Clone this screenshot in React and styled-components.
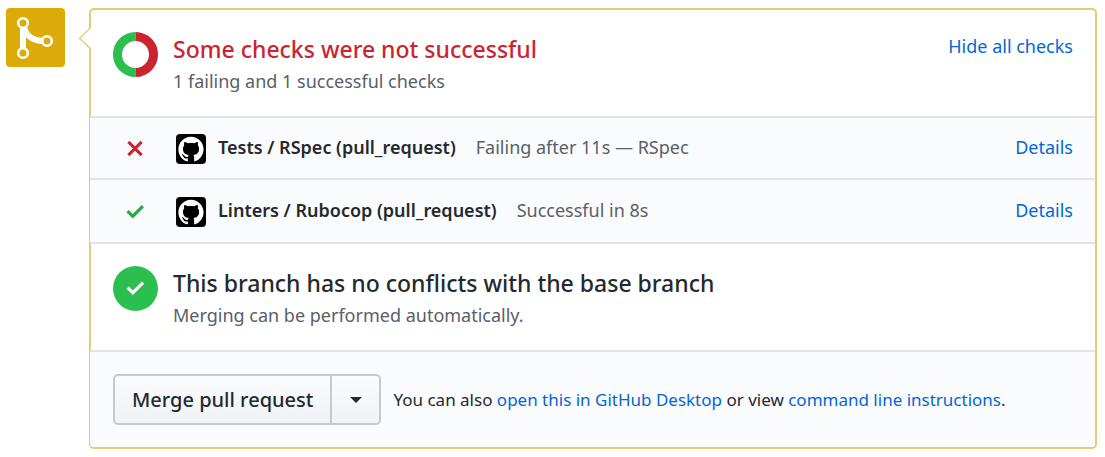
import React from "react";
import styled, { createGlobalStyle } from "styled-components";

const GlobalStyle = createGlobalStyle`
  * { box-sizing: border-box; }
  body {
    margin: 0;
    background: #fff;
    color: #24292e;
    font-family: "Segoe UI", "Noto Sans", "Open Sans", sans-serif;
    font-size: 18px;
    line-height: 28px;
  }
`;

const Page = styled.main`
  display: flex;
  align-items: flex-start;
  gap: 24px;
  padding: 8px 8px 8px 6px;
`;

const StateBadge = styled.div`
  display: flex;
  flex: none;
  align-items: center;
  justify-content: center;
  width: 59px;
  height: 59px;
  border-radius: 4px;
  background: #dbab09;
  color: #fff;
`;

const Card = styled.section`
  position: relative;
  flex: 1;
  min-width: 0;
  border: 2px solid #e2cc76;
  border-radius: 5px;
`;

const Pointer = styled.svg`
  position: absolute;
  top: 16px;
  left: -13px;
`;

const Section = styled.div`
  display: flex;
  align-items: flex-start;
  gap: 15px;
  padding: 22px 22px 21px;
`;

const SectionText = styled.div`
  flex: 1;
  min-width: 0;
`;

const Title = styled.h3`
  margin: 0;
  font-size: 23px;
  font-weight: 500;
  line-height: 35px;
  color: ${(p) => (p.$failing ? "#cb2431" : "#24292e")};
`;

const Description = styled.p`
  margin: 0;
  color: #586069;
`;

const Link = styled.a`
  color: #0366d6;
  text-decoration: none;
`;

const CheckList = styled.ul`
  margin: 0 0 0 -1px;
  padding: 0;
  list-style: none;
`;

const CheckItem = styled.li`
  display: flex;
  align-items: center;
  min-height: 62px;
  padding: 1px 22px 0 23px;
  border-top: 2px solid #e1e4e8;
  background: #fafbfc;

  &:last-child {
    min-height: 66px;
    border-bottom: 2px solid #e1e4e8;
  }
`;

const StatusIcon = styled.span`
  display: flex;
  justify-content: center;
  width: 44px;
  margin-right: 19px;
`;

const Avatar = styled.svg`
  flex: none;
  margin-right: 12px;
`;

const CheckText = styled.div`
  display: flex;
  flex: 1;
  gap: 20px;
  padding-bottom: 4px;
`;

const CheckName = styled.strong`
  font-weight: 600;
`;

const CheckNote = styled.span`
  flex: 1;
  color: #586069;
`;

const Footer = styled.div`
  display: flex;
  align-items: center;
  gap: 12px;
  margin-left: -1px;
  padding: 22px 22px 22px 23px;
  border-top: 2px solid #e1e4e8;
  border-radius: 0 0 3px 3px;
  background: #fafbfc;
`;

const ButtonGroup = styled.div`
  display: flex;
  flex: none;
`;

const Button = styled.button`
  display: flex;
  align-items: center;
  justify-content: center;
  height: 51px;
  padding: 0 17px;
  border: 2px solid #c6cacd;
  border-radius: 5px 0 0 5px;
  background: linear-gradient(#fafbfc, #eff3f6);
  color: #24292e;
  font: 500 20px/30px "Segoe UI", "Noto Sans", "Open Sans", sans-serif;
  white-space: nowrap;
`;

const MenuButton = styled(Button)`
  width: 51px;
  margin-left: -2px;
  padding: 0;
  border-radius: 0 5px 5px 0;
`;

const FooterNote = styled.p`
  margin: 0;
  font-size: 17px;
`;

const MARK =
  "M8 0C3.58 0 0 3.58 0 8c0 3.54 2.29 6.53 5.47 7.59.4.07.55-.17.55-.38 0-.19-.01-.82-.01-1.49-2.01.37-2.53-.49-2.69-.94-.09-.23-.48-.94-.82-1.13-.28-.15-.68-.52-.01-.53.63-.01 1.08.58 1.23.82.72 1.21 1.87.87 2.33.66.07-.52.28-.87.51-1.07-1.78-.2-3.64-.89-3.64-3.95 0-.87.31-1.59.82-2.15-.08-.2-.36-1.02.08-2.12 0 0 .67-.21 2.2.82.64-.18 1.32-.27 2-.27s1.36.09 2 .27c1.53-1.04 2.2-.82 2.2-.82.44 1.1.16 1.92.08 2.12.51.56.82 1.27.82 2.15 0 3.07-1.87 3.75-3.65 3.95.29.25.54.73.54 1.48 0 1.07-.01 1.93-.01 2.2 0 .21.15.46.55.38A8.01 8.01 0 0 0 16 8c0-4.42-3.58-8-8-8z";

const MergeIcon = () => (
  <svg width="59" height="59" viewBox="0 0 59 59" fill="none" stroke="currentColor" aria-hidden="true">
    <path d="M17 18V42" strokeWidth="6" />
    <path d="M18 19C20 29 29 33 37 33" strokeWidth="6" />
    <g fill="#dbab09" strokeWidth="2.6">
      <circle cx="17" cy="15" r="4.8" />
      <circle cx="17" cy="45" r="4.8" />
      <circle cx="41" cy="33" r="4.8" />
    </g>
  </svg>
);

const Donut = () => (
  <svg width="45" height="45" viewBox="0 0 45 45" fill="none" strokeWidth="9" role="img" aria-label="1 of 2 checks passed">
    <path d="M22.5 4.5a18 18 0 0 0 0 36" stroke="#2cbe4e" />
    <path d="M22.5 4.5a18 18 0 0 1 0 36" stroke="#cb2431" />
  </svg>
);

const Tick = ({ color }) => (
  <svg width="18" height="14" viewBox="0 0 18 14" fill={color} aria-hidden="true">
    <path d="M18 2.25L6.75 13.5 0.4 7.15l2.25-2.25 4.1 4.1L15.75 0z" />
  </svg>
);

const Cross = () => (
  <svg width="18" height="18" viewBox="0 0 18 18" stroke="#cb2431" strokeWidth="3" aria-hidden="true">
    <path d="M2.4 1.9l13.2 13.2M15.6 1.9L2.4 15.1" />
  </svg>
);

const PassedIcon = () => (
  <svg width="45" height="45" viewBox="0 0 45 45" aria-hidden="true">
    <circle cx="22.5" cy="22.5" r="22.5" fill="#2cbe4e" />
    <path d="M31.2 17.8L19.9 29.1l-6.4-6.3 2.3-2.3 4.1 4.1 9-9z" fill="#fff" />
  </svg>
);

const AppAvatar = () => (
  <Avatar width="30" height="30" viewBox="0 0 30 30" aria-hidden="true">
    <rect width="30" height="30" rx="4" fill="#000" />
    <path d={MARK} fill="#fff" transform="translate(2.4 2.8) scale(1.575)" />
  </Avatar>
);

const checks = [
  { name: "Tests / RSpec (pull_request)", note: "Failing after 11s — RSpec", passed: false },
  { name: "Linters / Rubocop (pull_request)", note: "Successful in 8s", passed: true },
];

export default function App() {
  return (
    <>
      <GlobalStyle />
      <Page>
        <StateBadge>
          <MergeIcon />
        </StateBadge>
        <Card>
          <Pointer width="13" height="24" viewBox="0 0 13 24" aria-hidden="true">
            <path d="M13 1L1.500 12.500 13 23" fill="#fff" stroke="#e2cc76" strokeWidth="1.300" />
          </Pointer>
          <Section>
            <Donut />
            <SectionText>
              <Title $failing>Some checks were not successful</Title>
              <Description>1 failing and 1 successful checks</Description>
            </SectionText>
            <Link href="#checks">Hide all checks</Link>
          </Section>
          <CheckList id="checks">
            {checks.map((check) => (
              <CheckItem key={check.name}>
                <StatusIcon>{check.passed ? <Tick color="#28a745" /> : <Cross />}</StatusIcon>
                <AppAvatar />
                <CheckText>
                  <CheckName>{check.name}</CheckName>
                  <CheckNote>{check.note}</CheckNote>
                  <Link href="#details">Details</Link>
                </CheckText>
              </CheckItem>
            ))}
          </CheckList>
          <Section>
            <PassedIcon />
            <SectionText>
              <Title>This branch has no conflicts with the base branch</Title>
              <Description>Merging can be performed automatically.</Description>
            </SectionText>
          </Section>
          <Footer>
            <ButtonGroup>
              <Button type="button">Merge pull request</Button>
              <MenuButton type="button" aria-label="Select merge method">
                <svg width="12" height="6" viewBox="0 0 12 6" fill="currentColor" aria-hidden="true">
                  <path d="M0 0h12L6 6z" />
                </svg>
              </MenuButton>
            </ButtonGroup>
            <FooterNote>
              You can also <Link href="#desktop">open this in GitHub Desktop</Link> or view{" "}
              <Link href="#instructions">command line instructions</Link>.
            </FooterNote>
          </Footer>
        </Card>
      </Page>
    </>
  );
}
